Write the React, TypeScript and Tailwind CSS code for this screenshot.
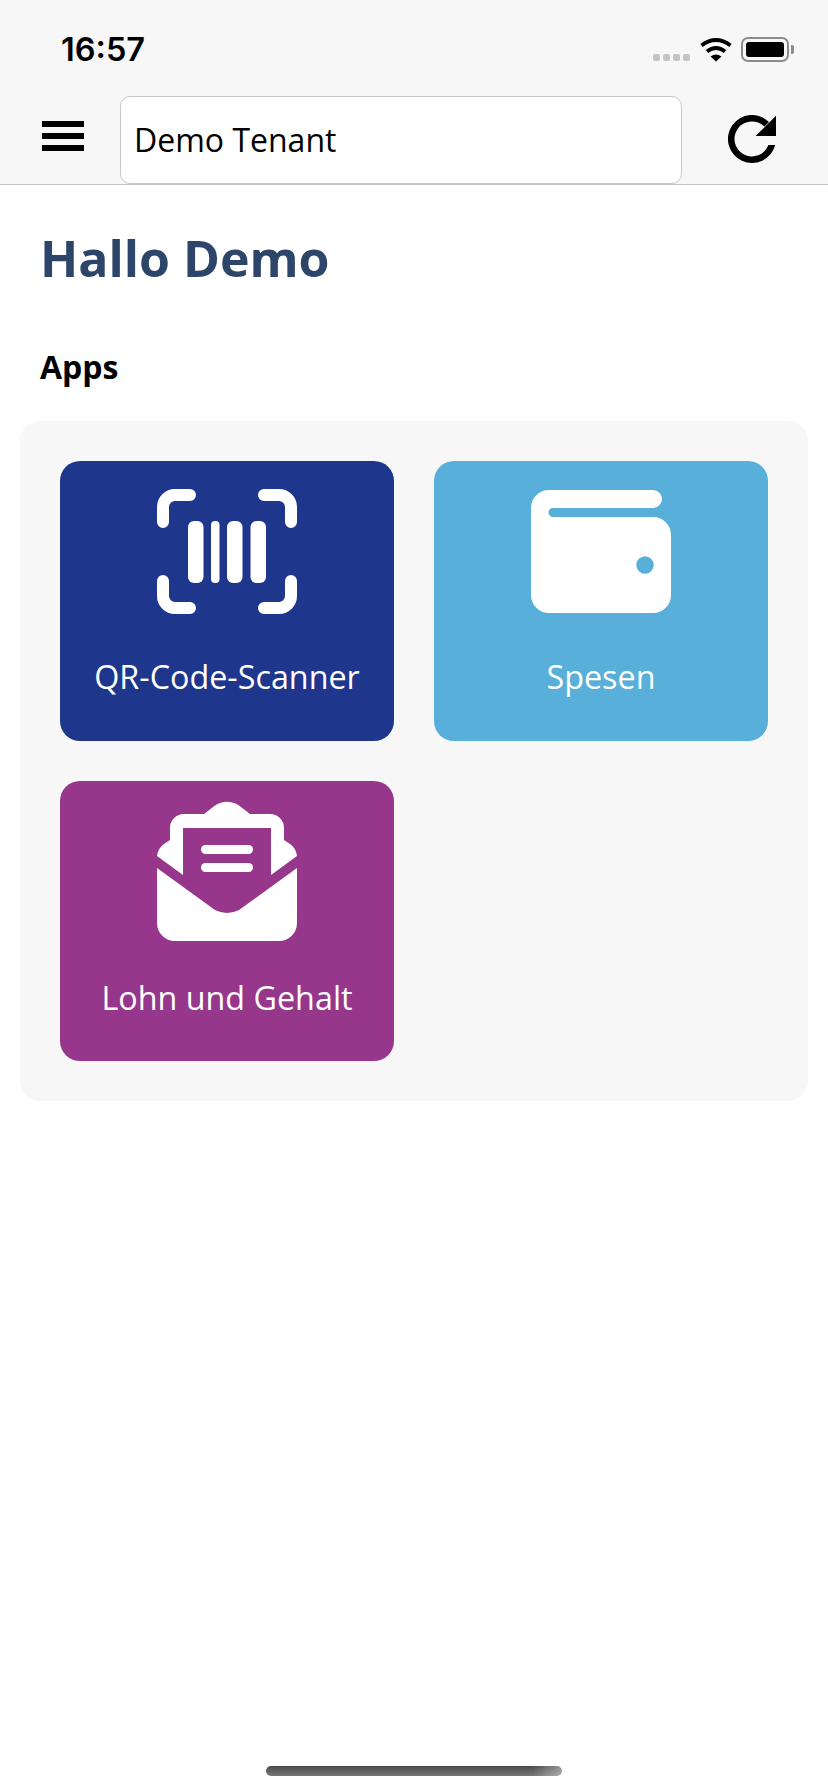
export default function App() {
  const font = "font-['Open_Sans',sans-serif]";
  return (
    <div className={`h-[1792px] w-[828px] flex flex-col bg-white overflow-hidden ${font}`}>
      <header className="bg-[#f7f7f7] border-b border-[#c6c6c6] h-[185px] shrink-0 flex flex-col">
        <div className="h-[96px] shrink-0 flex items-start justify-between pl-[61px] pr-[34px] pt-[30px]">
          <span className="font-['Inter',sans-serif] font-semibold text-[32.5px] leading-[40px] text-black">16:57</span>
          <div className="flex items-start pt-[7px]">
            <div className="flex gap-[3px] mt-[17px] mr-[10px]">
              <span className="w-[7px] h-[7px] rounded-[2px] bg-[#c4c4c4]" />
              <span className="w-[7px] h-[7px] rounded-[2px] bg-[#c4c4c4]" />
              <span className="w-[7px] h-[7px] rounded-[2px] bg-[#c4c4c4]" />
              <span className="w-[7px] h-[7px] rounded-[2px] bg-[#c4c4c4]" />
            </div>
            <svg width="32" height="25" viewBox="0 0 32 25" className="mr-[9px]">
              <path d="M1.5 8.5 Q16 -2.5 30.5 8.5" fill="none" stroke="black" strokeWidth="4" />
              <path d="M7 14.5 Q16 7.5 25 14.5" fill="none" stroke="black" strokeWidth="4" />
              <path d="M10.5 19.5 Q16 15.5 21.5 19.5 L16 24.5 Z" fill="black" />
            </svg>
            <div className="w-[48px] h-[25px] rounded-[7px] border-2 border-[#8c8c8c] p-[3px]">
              <div className="w-full h-full rounded-[3px] bg-black" />
            </div>
            <span className="w-[3px] h-[9px] mt-[8px] ml-[2px] rounded-r-[2px] bg-[#8c8c8c]" />
          </div>
        </div>
        <div className="flex-1 flex items-stretch pl-[42px] pr-[52px]">
          <div className="w-[78px] shrink-0 flex flex-col gap-[6px] pt-[25px]">
            <span className="block w-[42px] h-[6px] bg-black" />
            <span className="block w-[42px] h-[6px] bg-black" />
            <span className="block w-[42px] h-[6px] bg-black" />
          </div>
          <div className="w-[562px] h-[88px] bg-white border border-[#c8c8c8] rounded-[10px] pl-[13px] flex items-center text-[32px] text-black">
            Demo Tenant
          </div>
          <div className="flex-1 flex justify-end pt-[19px]">
            <svg width="48" height="48" viewBox="0 0 48 48">
              <path fill="black" d="M47.2 30 A24 24 0 1 1 41 7.06 L36.4 11.6 A17.5 17.5 0 1 0 40.4 30 Z" />
              <path d="M48 0.7 V21 H27.6 Z" fill="black" />
            </svg>
          </div>
        </div>
      </header>

      <main className="flex-1 flex flex-col">
        <h1 className="pl-[40px] pt-[39px] text-[50px] leading-[68px] font-bold text-[#2c4568]">Hallo Demo</h1>
        <h2 className="pl-[40px] pt-[53px] text-[32px] leading-[44px] font-bold text-black">Apps</h2>
        <section className="mx-[20px] mt-[32px] p-[40px] w-[788px] h-[680px] bg-[#f7f7f7] rounded-[20px] grid grid-cols-[334px_334px] auto-rows-[280px] gap-[40px]">
          <div className="rounded-[20px] bg-[#1e368c] flex flex-col items-center pt-[28px] text-white">
            <svg width="140" height="125" viewBox="0 0 140 125">
              <g fill="none" stroke="white" strokeWidth="12" strokeLinecap="round">
                <path d="M6 33 V18 A12 12 0 0 1 18 6 H33" />
                <path d="M134 33 V18 A12 12 0 0 0 122 6 H107" />
                <path d="M6 92 V107 A12 12 0 0 0 18 119 H33" />
                <path d="M134 92 V107 A12 12 0 0 1 122 119 H107" />
              </g>
              <rect x="31" y="32" width="15.5" height="62" rx="6" fill="white" />
              <rect x="54" y="32" width="8.5" height="62" rx="4" fill="white" />
              <rect x="70" y="32" width="15.5" height="62" rx="6" fill="white" />
              <rect x="93.5" y="32" width="15.5" height="62" rx="6" fill="white" />
            </svg>
            <span className="mt-[40px] text-[32.3px] leading-[44px]">QR-Code-Scanner</span>
          </div>
          <div className="rounded-[20px] bg-[#58b0da] flex flex-col items-center pt-[29px] text-white">
            <svg width="140" height="124" viewBox="0 0 140 124">
              <path
                fillRule="evenodd"
                fill="white"
                d="M18 0 H122 A9 9 0 0 1 122 18 H22 A4.5 4.5 0 0 0 22 27 H122 A18 18 0 0 1 140 45 V105 A18 18 0 0 1 122 123 H18 A18 18 0 0 1 0 105 V18 A18 18 0 0 1 18 0 Z M122.7 75 A8.7 8.7 0 1 0 105.3 75 A8.7 8.7 0 1 0 122.7 75 Z"
              />
            </svg>
            <span className="mt-[40px] text-[32.3px] leading-[44px]">Spesen</span>
          </div>
          <div className="rounded-[20px] bg-[#97378c] flex flex-col items-center pt-[20px] text-white">
            <svg width="140" height="140" viewBox="0 0 140 140">
              <path fill="white" d="M0 67 L58 109 Q70 115 82 109 L140 67 V122 A18 18 0 0 1 122 140 H18 A18 18 0 0 1 0 122 Z" />
              <path
                fill="white"
                fillRule="evenodd"
                d="M0 55 Q1 47 7 43 L13 39 V27 A14 14 0 0 1 27 13 H47 L58 4.5 Q70 -3 82 4.5 L93 13 H113 A14 14 0 0 1 127 27 V39 L133 43 Q139 47 140 55 L114 74 V27 H26 V74 Z"
              />
              <rect x="44" y="44" width="52" height="9" rx="4.5" fill="white" />
              <rect x="44" y="62" width="52" height="9" rx="4.5" fill="white" />
            </svg>
            <span className="mt-[34px] text-[32.3px] leading-[44px]">Lohn und Gehalt</span>
          </div>
        </section>
        <div className="mt-auto pb-[16px] flex justify-center">
          <div className="w-[296px] h-[10px] rounded-full bg-[linear-gradient(90deg,transparent_90%,rgba(255,255,255,0.4)_100%),linear-gradient(180deg,#4a4a4a,#777)]" />
        </div>
      </main>
    </div>
  );
}
